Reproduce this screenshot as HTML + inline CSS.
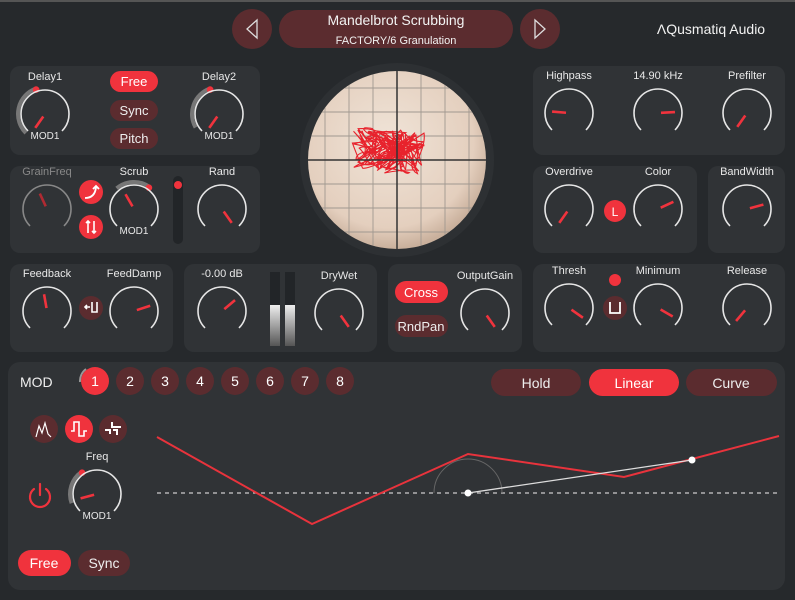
<!DOCTYPE html>
<html><head><meta charset="utf-8"><style>
html,body{margin:0;padding:0;background:#26292c;width:795px;height:600px;overflow:hidden;font-family:"Liberation Sans",sans-serif}
svg{position:absolute;left:0;top:0}
</style></head><body>
<svg id="s" width="795" height="600" xmlns="http://www.w3.org/2000/svg" font-family="Liberation Sans, sans-serif">
<defs>
<radialGradient id="bg" cx="0.45" cy="0.4" r="0.6"><stop offset="0" stop-color="#f0e4d8"/><stop offset="0.8" stop-color="#e4cfbe"/><stop offset="1" stop-color="#c9b09c"/></radialGradient>
<linearGradient id="mt" x1="0" y1="0" x2="0" y2="1"><stop offset="0" stop-color="#eee"/><stop offset="1" stop-color="#555"/></linearGradient>
<clipPath id="cc"><circle cx="397" cy="160" r="89"/></clipPath>
</defs>
<rect x="0" y="0" width="795" height="600" fill="#26292c"/>
<rect x="0" y="0" width="795" height="2" fill="#555"/>
<circle cx="252" cy="29" r="20" fill="#5b2c2f"/>
<path d="M257 20 L247 29 L257 38 Z" fill="none" stroke="#ddd" stroke-width="1.3"/>
<rect x="279" y="10" width="234" height="38" rx="19" fill="#5b2c2f"/>
<circle cx="540" cy="29" r="20" fill="#5b2c2f"/>
<path d="M535 20 L545 29 L535 38 Z" fill="none" stroke="#ddd" stroke-width="1.3"/>
<text x="396" y="25" fill="#f2f2f2" font-size="14" text-anchor="middle">Mandelbrot Scrubbing</text>
<text x="396" y="44" fill="#f2f2f2" font-size="11" text-anchor="middle">FACTORY/6 Granulation</text>
<text x="711" y="34" fill="#f2f2f2" font-size="14" text-anchor="middle">ΛQusmatiq Audio</text>
<g fill="#303336">
<rect x="10" y="66" width="250" height="89" rx="10"/>
<rect x="10" y="166" width="250" height="87" rx="10"/>
<rect x="10" y="264" width="163" height="88" rx="10"/>
<rect x="184" y="264" width="193" height="88" rx="10"/>
<rect x="388" y="264" width="134" height="88" rx="10"/>
<rect x="533" y="66" width="252" height="89" rx="10"/>
<rect x="533" y="166" width="164" height="87" rx="10"/>
<rect x="708" y="166" width="77" height="87" rx="10"/>
<rect x="533" y="264" width="252" height="88" rx="10"/>
<rect x="8" y="362" width="777" height="228" rx="12"/>
</g>
<circle cx="397" cy="160" r="97" fill="#2d3033"/>
<circle cx="397" cy="160" r="89" fill="url(#bg)"/>
<g clip-path="url(#cc)" stroke="#a09890" stroke-width="0.9" id="grid"></g>
<g id="scr"></g>
<line x1="308" y1="160" x2="486" y2="160" stroke="#333" stroke-width="1.5"/>
<line x1="397" y1="71" x2="397" y2="249" stroke="#333" stroke-width="1.5"/>
<rect x="110" y="71" width="48" height="21" rx="10.5" fill="#f0333d"/>
<text x="134" y="86" fill="#fff" font-size="13" text-anchor="middle">Free</text>
<rect x="110" y="100" width="48" height="21" rx="10.5" fill="#5b2c2f"/>
<text x="134" y="115" fill="#eee" font-size="13" text-anchor="middle">Sync</text>
<rect x="110" y="128" width="48" height="21" rx="10.5" fill="#5b2c2f"/>
<text x="134" y="143" fill="#eee" font-size="13" text-anchor="middle">Pitch</text>
<circle cx="91" cy="192" r="12" fill="#f0333d"/>
<path d="M85 198 Q95 198 96 187 M93 189 L96 186 L99 189" fill="none" stroke="#fff" stroke-width="1.8"/>
<circle cx="91" cy="227" r="12" fill="#f0333d"/>
<path d="M88 221 V233 M86 223 L88 221 L90 223 M94 221 V233 M92 231 L94 233 L96 231" fill="none" stroke="#fff" stroke-width="1.6"/>
<rect x="173" y="176" width="10" height="68" rx="5" fill="#222528"/>
<circle cx="178" cy="185" r="4" fill="#f0333d"/>
<circle cx="91" cy="308" r="12" fill="#5b2c2f"/>
<path d="M85 307 H90 M87 305 L85 307 L87 309 M92 302 V312 H97 V302" fill="none" stroke="#fff" stroke-width="1.6"/>
<rect x="270" y="272" width="10" height="74" fill="#222528"/>
<rect x="285" y="272" width="10" height="74" fill="#222528"/>
<rect x="270" y="305" width="10" height="41" fill="url(#mt)"/>
<rect x="285" y="305" width="10" height="41" fill="url(#mt)"/>
<rect x="395" y="281" width="53" height="22" rx="11" fill="#f0333d"/>
<text x="421" y="297" fill="#fff" font-size="13" text-anchor="middle">Cross</text>
<rect x="395" y="315" width="53" height="22" rx="11" fill="#5b2c2f"/>
<text x="421" y="331" fill="#eee" font-size="13" text-anchor="middle">RndPan</text>
<circle cx="615" cy="211" r="11" fill="#f0333d"/>
<text x="615" y="216" fill="#fff" font-size="12" text-anchor="middle">L</text>
<circle cx="615" cy="280" r="6" fill="#f0333d"/>
<circle cx="615" cy="308" r="12" fill="#5b2c2f"/>
<path d="M610 302 V313 H620 V302" fill="none" stroke="#fff" stroke-width="1.8"/>
<text x="20" y="387" fill="#eee" font-size="14">MOD</text>
<g id="nums"></g>
<rect x="491" y="369" width="90" height="27" rx="13.5" fill="#5b2c2f"/>
<text x="536" y="388" fill="#eee" font-size="14" text-anchor="middle">Hold</text>
<rect x="589" y="369" width="90" height="27" rx="13.5" fill="#f0333d"/>
<text x="634" y="388" fill="#fff" font-size="14" text-anchor="middle">Linear</text>
<rect x="686" y="369" width="91" height="27" rx="13.5" fill="#5b2c2f"/>
<text x="731" y="388" fill="#eee" font-size="14" text-anchor="middle">Curve</text>
<circle cx="44" cy="429" r="14" fill="#5b2c2f"/>
<path d="M36 437 L39 426 L42 433 L45 423 L48 434 L51 437" fill="none" stroke="#fff" stroke-width="1.2"/>
<circle cx="79" cy="429" r="14" fill="#f0333d"/>
<path d="M71 431 H74 V422 H79 V436 H84 V431 H87" fill="none" stroke="#fff" stroke-width="1.6"/>
<circle cx="113" cy="429" r="14" fill="#5b2c2f"/>
<path d="M105 430 H110 V434 M112 422 V427 H121 M113 430 H117 V435" fill="none" stroke="#fff" stroke-width="2"/>
<path d="M34 489 A10 10 0 1 0 46 489 M40 484 V495" fill="none" stroke="#f0333d" stroke-width="2.2" stroke-linecap="round"/>
<rect x="18" y="550" width="53" height="26" rx="13" fill="#f0333d"/>
<text x="44" y="568" fill="#fff" font-size="14" text-anchor="middle">Free</text>
<rect x="78" y="550" width="52" height="26" rx="13" fill="#5b2c2f"/>
<text x="104" y="568" fill="#eee" font-size="14" text-anchor="middle">Sync</text>
<line x1="157" y1="493" x2="780" y2="493" stroke="#ccc" stroke-width="1.2" stroke-dasharray="4 4"/>
<path d="M434 493 A34 34 0 0 1 502 493" fill="none" stroke="#666" stroke-width="1"/>
<polyline points="157,437 312,524 468,454 624,477 779,436" fill="none" stroke="#e8333c" stroke-width="2"/>
<line x1="468" y1="493" x2="692" y2="460" stroke="#ddd" stroke-width="1.3"/>
<circle cx="468" cy="493" r="3.5" fill="#fff"/>
<circle cx="692" cy="460" r="3.5" fill="#fff"/>
<g id="knobs"></g>
</svg>
<script>
var NS="http://www.w3.org/2000/svg",K=document.getElementById("knobs");
function el(t,a,p){var e=document.createElementNS(NS,t);for(var k in a)e.setAttribute(k,a[k]);(p||K).appendChild(e);return e;}
function txt(x,y,s,sz,c){var t=el("text",{x:x,y:y,"font-size":sz||11,fill:c||"#e8e8e8","text-anchor":"middle"});t.textContent=s;}
function pt(cx,cy,r,a){a=a*Math.PI/180;return [cx+r*Math.cos(a),cy+r*Math.sin(a)];}
function knob(cx,cy,ang,label,opt){opt=opt||{};var r=24,dim=opt.dim;
 var s=pt(cx,cy,r,135),e=pt(cx,cy,r,45);
 if(opt.mod){var m1=pt(cx,cy,r+3,opt.mod[0]),m2=pt(cx,cy,r+3,opt.mod[1]);
  el("path",{d:"M"+m1+" A"+(r+3)+" "+(r+3)+" 0 0 1 "+m2,fill:"none",stroke:"#777","stroke-width":4});
  var d=pt(cx,cy,r+2,opt.mod[1]);el("circle",{cx:d[0],cy:d[1],r:3.3,fill:"#f0333d"});}
 el("path",{d:"M"+s+" A"+r+" "+r+" 0 1 1 "+e,fill:"none",stroke:dim?"#888":"#e6e6e6","stroke-width":1.6});
 var a=pt(cx,cy,3,ang),b=pt(cx,cy,17,ang);
 el("line",{x1:a[0],y1:a[1],x2:b[0],y2:b[1],stroke:dim?"#b02a32":"#f0333d","stroke-width":2.6});
 if(label)txt(cx,cy-34,label,11,dim?"#888":"#e8e8e8");
 if(opt.m1)txt(cx,cy+25,"MOD1",10);
}
knob(45,114,125,"Delay1",{mod:[135,250],m1:1});
knob(219,114,125,"Delay2",{mod:[150,250],m1:1});
knob(47,209,-115,"GrainFreq",{dim:1});
knob(134,209,-120,"Scrub",{mod:[230,305],m1:1});
knob(222,209,55,"Rand");
knob(47,311,-100,"Feedback");
knob(134,311,-18,"FeedDamp");
knob(222,311,-40,"-0.00 dB");
knob(339,313,55,"DryWet");
knob(485,313,55,"OutputGain");
knob(569,113,185,"Highpass");
knob(658,113,-3,"14.90 kHz");
knob(747,113,125,"Prefilter");
knob(569,209,125,"Overdrive");
knob(658,209,-25,"Color");
knob(747,209,-15,"BandWidth");
knob(569,308,35,"Thresh");
knob(658,308,30,"Minimum");
knob(747,308,130,"Release");
knob(97,494,165,"Freq",{mod:[160,235],m1:1});
var N=document.getElementById("nums");
for(var i=0;i<8;i++){var x=95+i*35;el("circle",{cx:x,cy:381,r:14,fill:i==0?"#f0333d":"#5b2c2f"},N);
 var t=el("text",{x:x,y:386,"font-size":14,fill:"#fff","text-anchor":"middle"},N);t.textContent=i+1;}
el("path",{d:"M80 382 A15 15 0 0 1 86 369",fill:"none",stroke:"#999","stroke-width":2},N);
var G=document.getElementById("grid");
for(var g=301;g<=493;g+=24){el("line",{x1:g,y1:60,x2:g,y2:260},G);}
for(var g=64;g<=260;g+=24){el("line",{x1:300,y1:g,x2:495,y2:g},G);}
var S=document.getElementById("scr"),seed=11;function rnd(){seed=(seed*9301+49297)%233280;return seed/233280;}
var d="M360 135",x=360,y=135;
for(var j=0;j<160;j++){var tx,ty;
 if(j<50){tx=352+rnd()*35;ty=127+rnd()*42;}else if(j<70){tx=370+rnd()*40;ty=130+rnd()*25;}else{tx=375+rnd()*50;ty=132+rnd()*42;}
 d+=" Q"+((x+tx)/2+ (rnd()-0.5)*14).toFixed(1)+" "+((y+ty)/2+(rnd()-0.5)*14).toFixed(1)+" "+tx.toFixed(1)+" "+ty.toFixed(1);x=tx;y=ty;}
el("path",{d:d,fill:"none",stroke:"#e8222c","stroke-width":1.1},S);
</script>
</body></html>
